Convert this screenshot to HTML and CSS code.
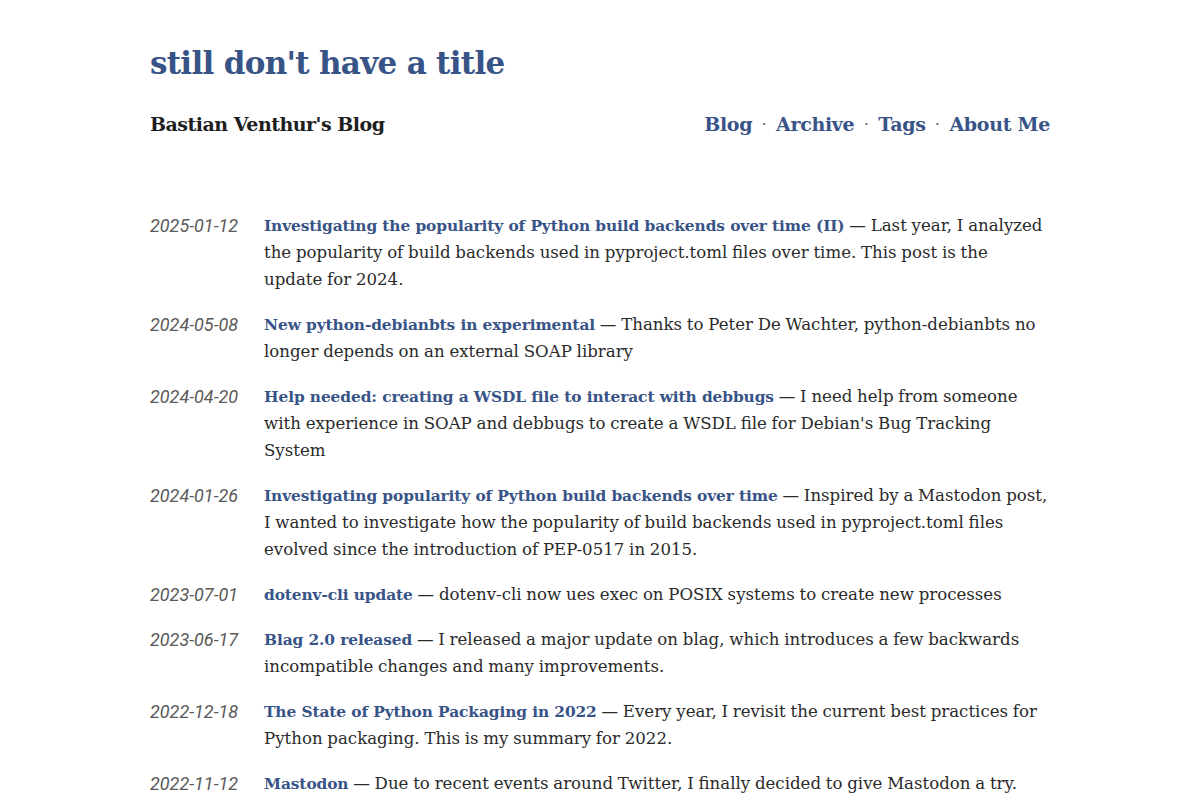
FILE: index.html
```html
<!DOCTYPE html>
<html lang="en">
<head>
<meta charset="utf-8">
<title>still don't have a title</title>
<link rel="stylesheet" href="styles.css">
</head>
<body>
<div class="page">
  <header class="site-header">
    <h1 class="site-title"><a href="#">still don't have a title</a></h1>
    <div class="header-row">
      <div class="site-subtitle">Bastian Venthur's Blog</div>
      <nav class="site-nav">
        <a href="#">Blog</a><span class="sep">·</span><a href="#">Archive</a><span class="sep">·</span><a href="#">Tags</a><span class="sep">·</span><a href="#">About Me</a>
      </nav>
    </div>
  </header>
  <main class="posts">
    <div class="post">
      <div class="date">2025-01-12</div>
      <div class="summary"><a href="#">Investigating the popularity of Python build backends over time (II)</a> — Last year, I analyzed the popularity of build backends used in pyproject.toml files over time. This post is the update for 2024.</div>
    </div>
    <div class="post">
      <div class="date">2024-05-08</div>
      <div class="summary"><a href="#">New python-debianbts in experimental</a> — Thanks to Peter De Wachter, python-debianbts no longer depends on an external SOAP library</div>
    </div>
    <div class="post">
      <div class="date">2024-04-20</div>
      <div class="summary"><a href="#">Help needed: creating a WSDL file to interact with debbugs</a> — I need help from someone with experience in SOAP and debbugs to create a WSDL file for Debian's Bug Tracking System</div>
    </div>
    <div class="post">
      <div class="date">2024-01-26</div>
      <div class="summary"><a href="#">Investigating popularity of Python build backends over time</a> — Inspired by a Mastodon post, I wanted to investigate how the popularity of build backends used in pyproject.toml files evolved since the introduction of PEP-0517 in 2015.</div>
    </div>
    <div class="post">
      <div class="date">2023-07-01</div>
      <div class="summary"><a href="#">dotenv-cli update</a> — dotenv-cli now ues exec on POSIX systems to create new processes</div>
    </div>
    <div class="post">
      <div class="date">2023-06-17</div>
      <div class="summary"><a href="#">Blag 2.0 released</a> — I released a major update on blag, which introduces a few backwards incompatible changes and many improvements.</div>
    </div>
    <div class="post">
      <div class="date">2022-12-18</div>
      <div class="summary"><a href="#">The State of Python Packaging in 2022</a> — Every year, I revisit the current best practices for Python packaging. This is my summary for 2022.</div>
    </div>
    <div class="post">
      <div class="date">2022-11-12</div>
      <div class="summary"><a href="#">Mastodon</a> — Due to recent events around Twitter, I finally decided to give Mastodon a try.</div>
    </div>
  </main>
</div>
</body>
</html>
```

FILE: styles.css
```css
html, body {
  margin: 0;
  padding: 0;
  background: #fff;
}
body {
  font-family: "DejaVu Serif", "Liberation Serif", serif;
  font-size: 16px;
  color: #2a2a2a;
}
a {
  color: #385487;
  text-decoration: none;
  font-weight: bold;
}
.page {
  width: 900px;
  margin: 0 auto;
  padding-top: 40px;
}
.site-title {
  margin: 0;
  font-size: 31px;
  line-height: 46px;
  letter-spacing: -0.7px;
}
.header-row {
  margin-top: 23px;
  display: flex;
  justify-content: space-between;
  align-items: center;
  line-height: 30px;
}
.site-subtitle {
  font-size: 19px;
  font-weight: bold;
  color: #1e1e1e;
  letter-spacing: -0.5px;
}
.site-nav {
  font-size: 19px;
  display: flex;
  align-items: center;
}
.site-nav a {
  letter-spacing: -0.3px;
}
.site-nav .sep {
  color: #555;
  font-size: 15px;
  margin: 0 9.5px;
}
.posts {
  margin-top: 73px;
}
.post {
  display: flex;
  line-height: 27px;
  margin-bottom: 18px;
}
.date {
  flex: 0 0 114px;
  font-family: Roboto, "Liberation Sans", sans-serif;
  font-style: italic;
  font-weight: 400;
  font-size: 18px;
  color: #5a5a5a;
}
.summary {
  flex: 1;
  font-size: 16.6px;
  word-spacing: -0.5px;
}
.summary a {
  font-size: 15.4px;
  line-height: 20px;
  letter-spacing: -0.1px;
  word-spacing: 0;
}
```
